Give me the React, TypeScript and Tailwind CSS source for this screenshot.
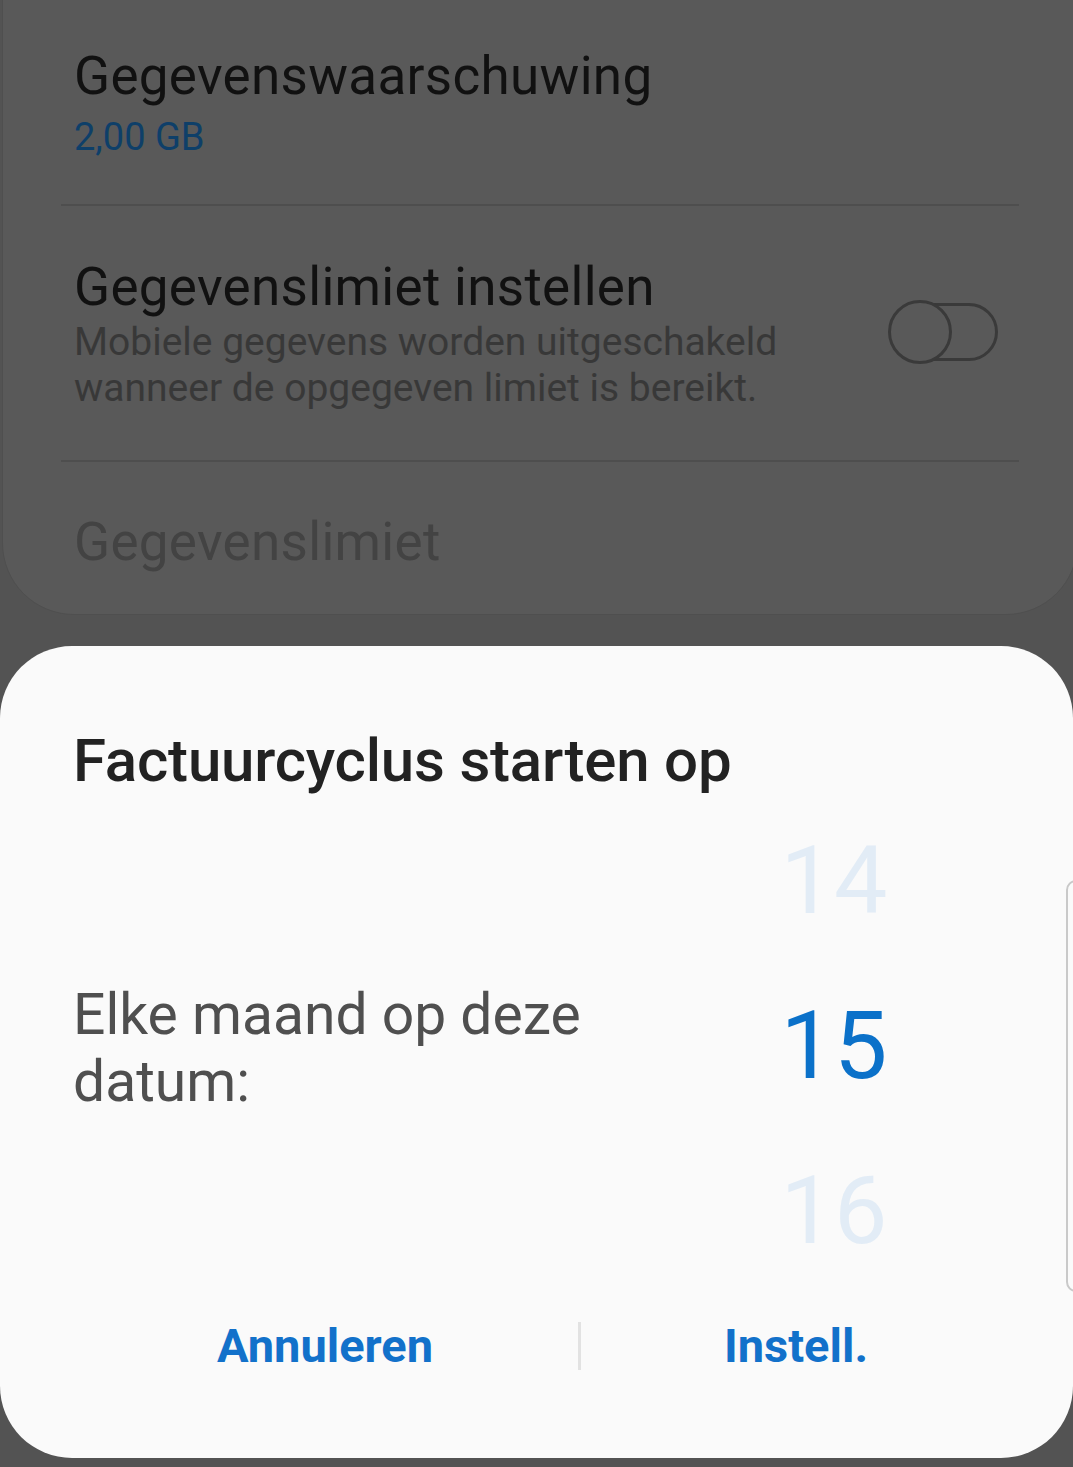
export default function App() {
  return (
    <div className="relative w-[1073px] h-[1467px] overflow-hidden bg-[#535353]" style={{ fontFamily: 'Roboto, "Noto Sans", sans-serif' }}>
      {/* background settings card */}
      <div className="h-[685px] ml-[2px] -mr-[5px] -mt-[70px] pt-[70px] rounded-b-[72px] bg-[#595959] border border-[#4f4f4f] flex flex-col">
        <div className="shrink-0 pl-[71px] pt-[44px] h-[203px]">
          <div className="text-[53px] leading-[62px] text-[#111111] tracking-[0.3px]">Gegevenswaarschuwing</div>
          <div className="text-[38px] leading-[46px] text-[#0e3f69] mt-[7px]">2,00 GB</div>
        </div>
        <div className="shrink-0 ml-[58px] mr-[58px] h-[2px] bg-[#4e4e4e]" />
        <div className="shrink-0 flex items-center pl-[71px] pr-[79px] h-[254px]">
          <div className="flex-1">
            <div className="text-[53px] leading-[62px] text-[#111111] tracking-[0.3px]">Gegevenslimiet instellen</div>
            <div className="text-[39px] leading-[46px] text-[#383838] mt-[1px]">Mobiele gegevens worden uitgeschakeld<br />wanneer de opgegeven limiet is bereikt.</div>
          </div>
          <div className="relative w-[110px] h-[64px] mt-[-2px]">
            <div className="absolute left-[6px] top-[3px] w-[104px] h-[58px] rounded-full border-[3px] border-[#3a3a3a]" />
            <div className="absolute left-0 top-0 w-[64px] h-[64px] rounded-full border-[3px] border-[#3a3a3a] bg-[#595959]" />
          </div>
        </div>
        <div className="shrink-0 ml-[58px] mr-[58px] h-[2px] bg-[#4e4e4e]" />
        <div className="pl-[71px] pt-[49px]">
          <div className="text-[53px] leading-[62px] text-[#434343] tracking-[0.3px]">Gegevenslimiet</div>
        </div>
      </div>

      {/* dialog */}
      <div className="mt-[31px] h-[812px] rounded-[72px] bg-[#fafafa] flex flex-col">
        <div className="pl-[73px] pt-[80px] text-[60px] leading-[70px] font-medium text-[#222222] tracking-[-0.2px]">Factuurcyclus starten op</div>
        <div className="flex flex-1 items-center pl-[73px]">
          <div className="flex-1 text-[57px] leading-[67px] text-[#4f4f4f] -mt-[28px]">Elke maand op deze<br />datum:</div>
          <div className="w-[150px] mr-[164px] flex flex-col items-center -mt-[34px]">
            <div className="text-[95px] leading-[165px] text-[#e2ecf6]">14</div>
            <div className="text-[95px] leading-[165px] text-[#0b71c9]">15</div>
            <div className="text-[95px] leading-[165px] text-[#e2ecf6]">16</div>
          </div>
        </div>
        <div className="flex items-center h-[130px] pb-[94px]">
          <div className="w-[578px] pl-[72px] text-center text-[47px] font-bold text-[#1271ca]">Annuleren</div>
          <div className="w-[3px] h-[48px] bg-[#e2e2e2]" />
          <div className="w-[430px] text-center text-[47px] font-bold text-[#1271ca]">Instell.</div>
        </div>
      </div>

      {/* edge handle */}
      <div className="absolute left-[1066px] top-[880px] w-[20px] h-[412px] rounded-[12px] border-2 border-[#c9c9c9]" />
    </div>
  );
}
